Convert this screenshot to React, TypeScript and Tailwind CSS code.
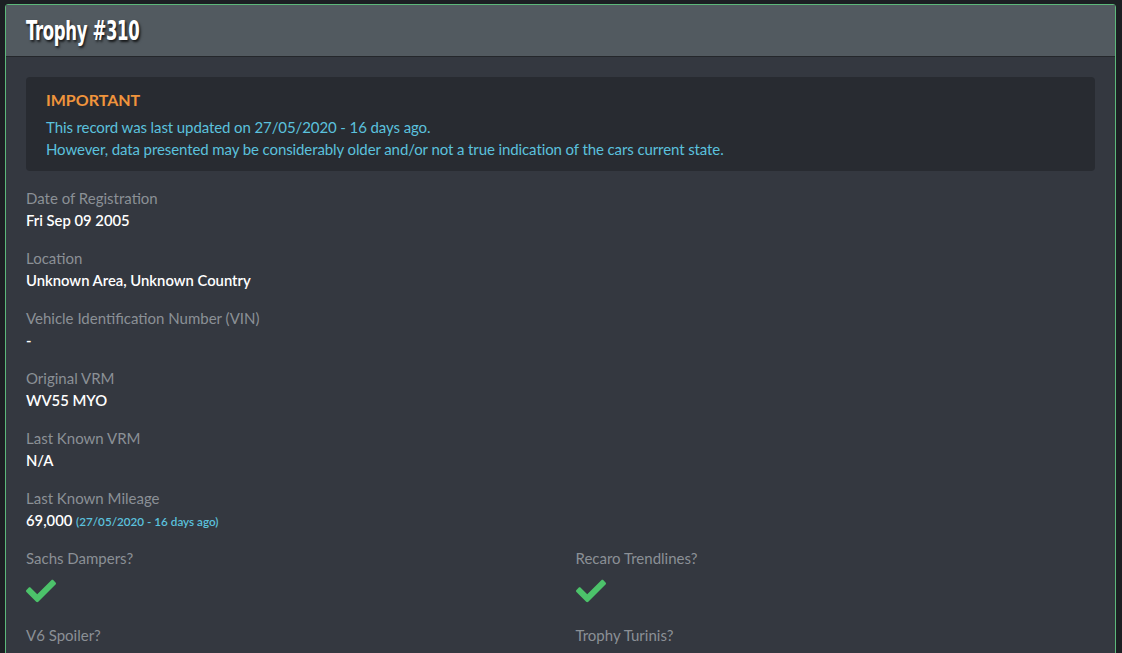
import React from "react";
import { FaCheck } from "react-icons/fa";

const Field = ({ label, children, last }: { label: string; children: React.ReactNode; last?: boolean }) => (
  <div className={last ? "mb-[15px]" : "mb-[16px]"}>
    <div className="text-[15px] leading-[22px] text-[#8b9096]">{label}</div>
    <div className="text-[14.8px] leading-[22px] font-semibold text-white">{children}</div>
  </div>
);

const Check = ({ label }: { label: string }) => (
  <div>
    <div className="text-[15px] leading-[22px] text-[#8b9096]">{label}</div>
    <div className="h-[55px] flex items-start pt-[7px]">
      <FaCheck className="w-[30px] h-[30px] text-[#4cc26a]" />
    </div>
  </div>
);

export default function App() {
  return (
    <div
      className="w-[1122px] h-[653px] overflow-hidden bg-[#1c1f23] pt-[4px] pl-[5px] pr-[6px]"
      style={{ fontFamily: "Lato, 'Open Sans', sans-serif" }}
    >
      <div className="border border-[#5cb87a] rounded-t-[3px] bg-[#343840] h-[700px]">
        <div className="h-[52px] bg-[#525a60] border-b border-[#24272b] flex items-center pl-[20px]">
          <h1
            className="text-[27px] leading-none font-bold text-white tracking-[-0.5px] scale-x-[0.68] origin-left whitespace-nowrap"
            style={{
              fontFamily: "'DejaVu Sans Condensed', 'DejaVu Sans', sans-serif",
              textShadow: "2px 2px 3px rgba(0,0,0,0.75)",
            }}
          >
            Trophy #310
          </h1>
        </div>
        <div className="px-[20px] pt-[20px]">
          <div className="bg-[#282b31] rounded-[4px] px-[20px] pt-[12px] pb-[11px] mb-[16px]">
            <div className="text-[16px] leading-[22px] font-bold text-[#f0943c] mb-[5px]">IMPORTANT</div>
            <div className="text-[15px] leading-[22px] tracking-[-0.1px] text-[#5bc1dd]">
              This record was last updated on 27/05/2020 - 16 days ago.
            </div>
            <div className="text-[15px] leading-[22px] tracking-[-0.1px] text-[#5bc1dd]">
              However, data presented may be considerably older and/or not a true indication of the cars current state.
            </div>
          </div>
          <Field label="Date of Registration">Fri Sep 09 2005</Field>
          <Field label="Location">Unknown Area, Unknown Country</Field>
          <Field label="Vehicle Identification Number (VIN)">-</Field>
          <Field label="Original VRM">WV55 MYO</Field>
          <Field label="Last Known VRM">N/A</Field>
          <Field label="Last Known Mileage" last>
            69,000{" "}
            <span className="text-[11.7px] font-semibold text-[#5bc1dd]">(27/05/2020 - 16 days ago)</span>
          </Field>
          <div className="grid grid-cols-2 gap-x-[30px]">
            <Check label="Sachs Dampers?" />
            <Check label="Recaro Trendlines?" />
            <Check label="V6 Spoiler?" />
            <Check label="Trophy Turinis?" />
          </div>
        </div>
      </div>
    </div>
  );
}
